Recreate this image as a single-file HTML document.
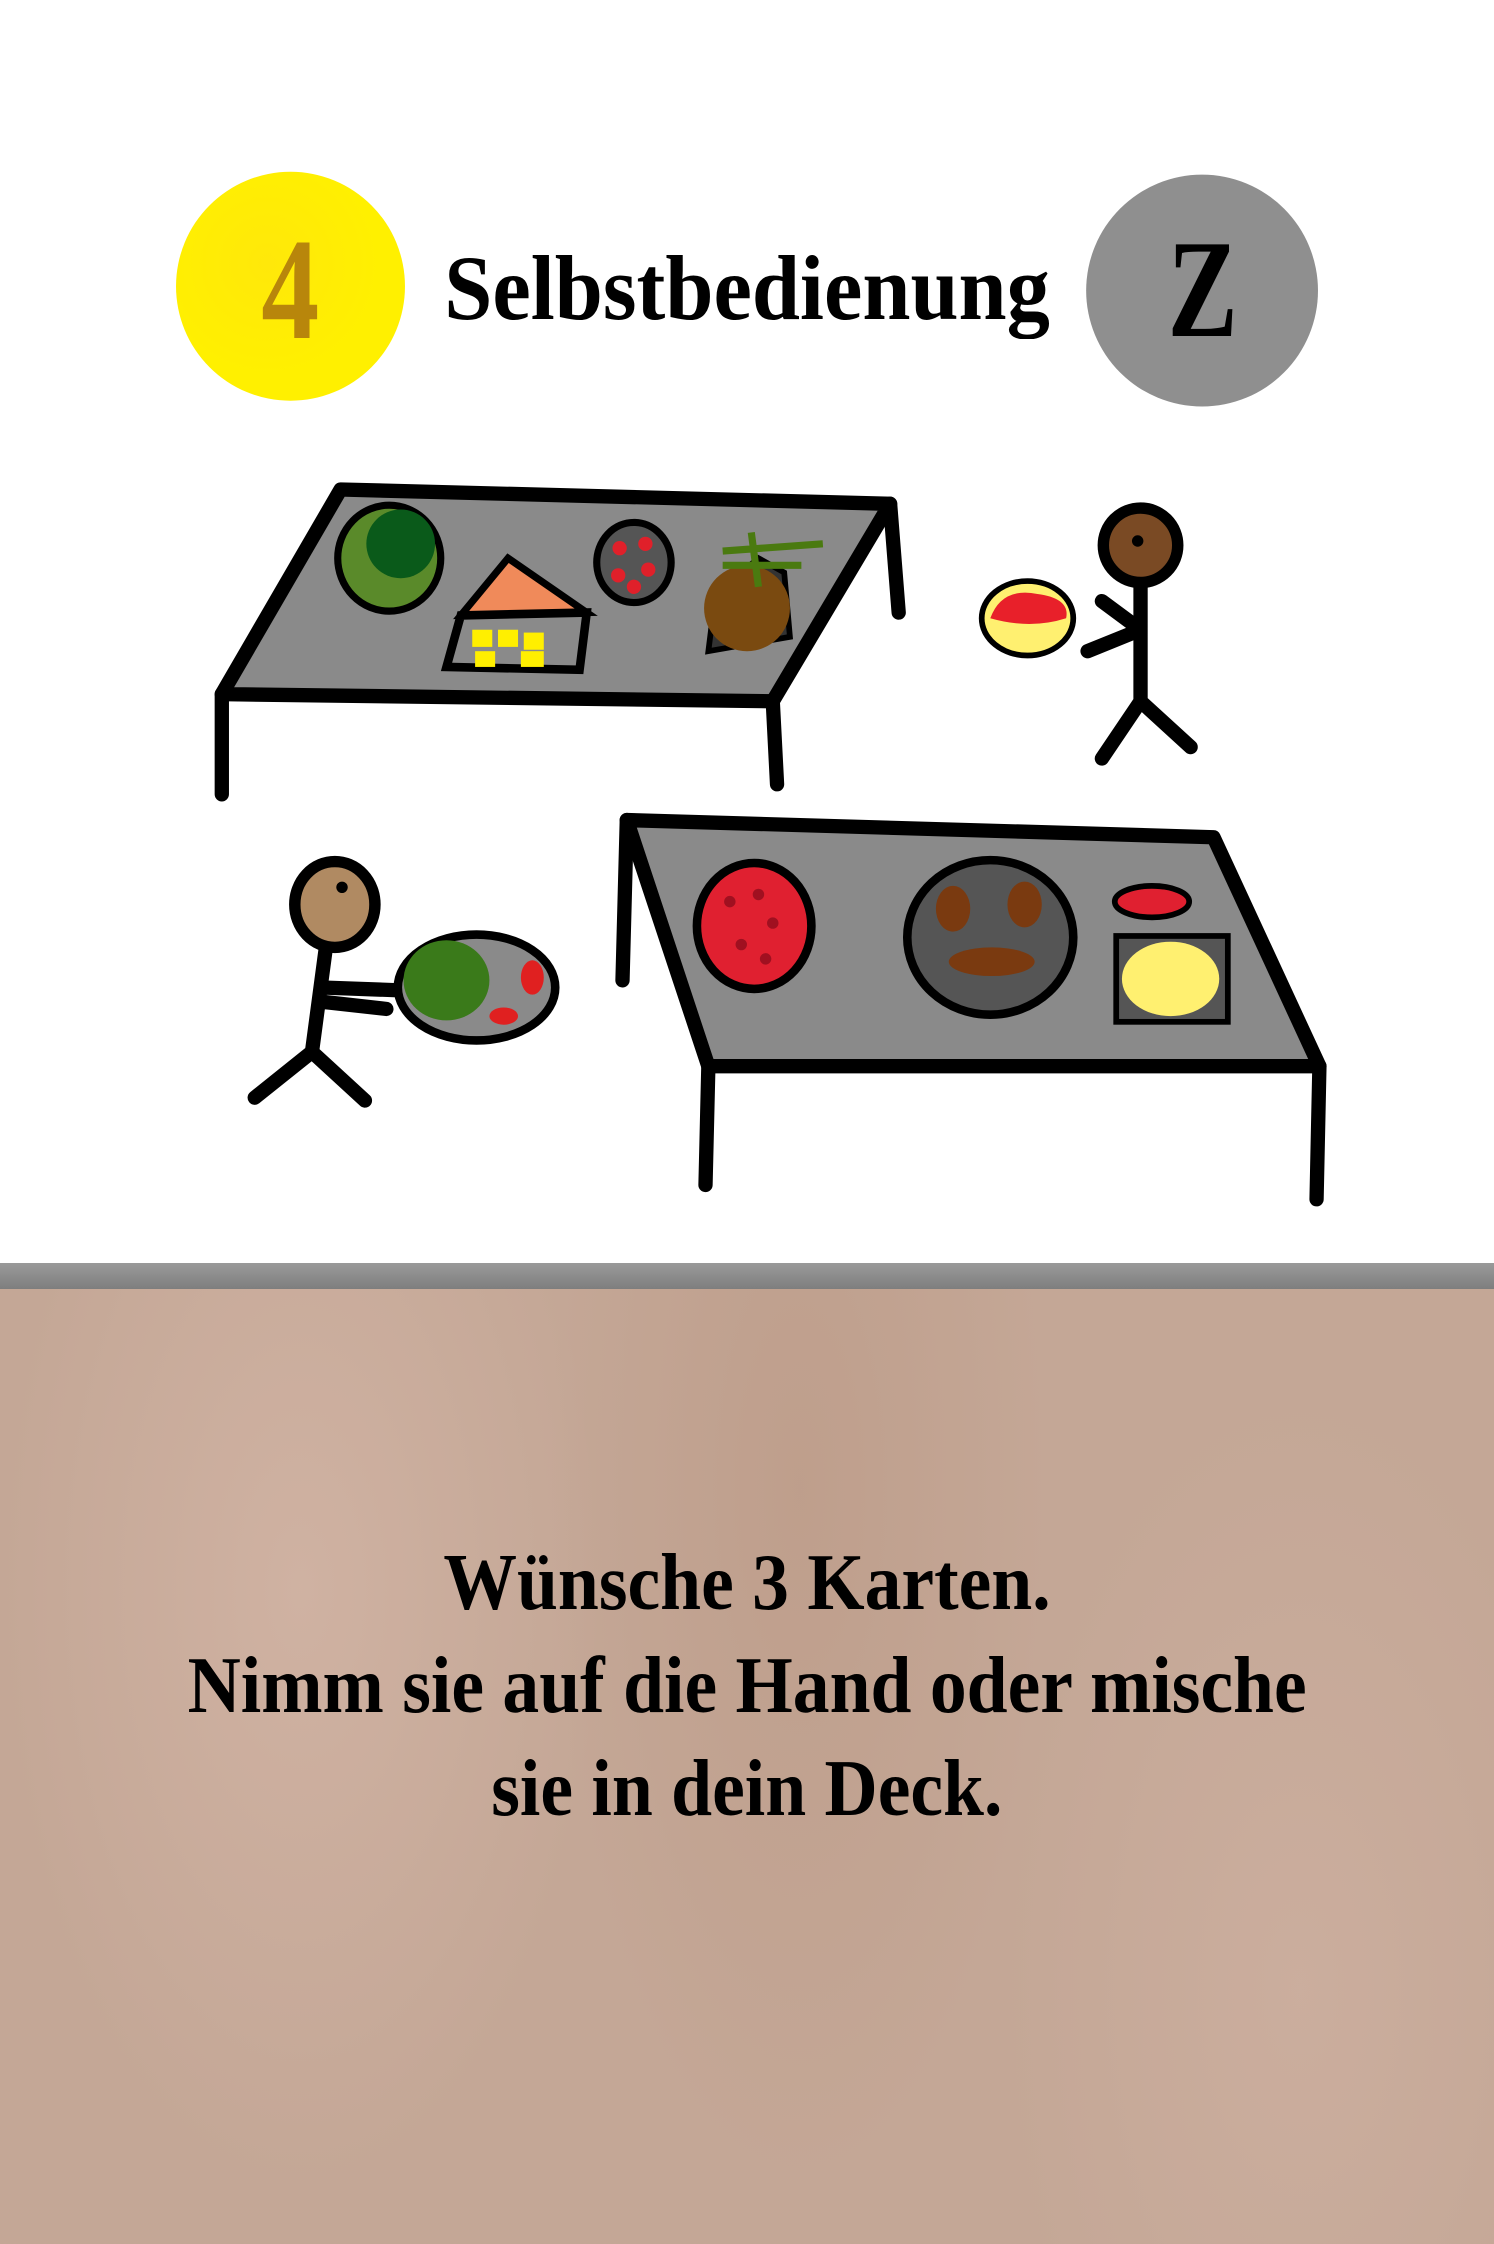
<!DOCTYPE html>
<html><head><meta charset="utf-8"><style>
html,body{margin:0;padding:0}
body{width:1494px;height:2244px;position:relative;overflow:hidden;background:#fff;font-family:"Liberation Serif",serif}
.band{position:absolute;left:0;top:1263px;width:1494px;height:26px;background:linear-gradient(#9a9a9a,#7e7e7e)}
.brown{position:absolute;left:0;top:1289px;width:1494px;height:955px;background:
radial-gradient(ellipse 300px 600px at 300px 300px,rgba(215,185,170,.6),transparent),
radial-gradient(ellipse 250px 700px at 800px 200px,rgba(185,150,130,.5),transparent),
radial-gradient(ellipse 300px 600px at 1300px 700px,rgba(210,180,165,.5),transparent),
#c4a796}
.t{position:absolute;left:0;width:1494px;text-align:center;font-weight:bold;color:#000;white-space:nowrap}
.t span{display:inline-block;transform:scaleX(.92)}
</style></head><body>
<div class="band"></div>
<div class="brown"></div>
<svg style="position:absolute;left:0;top:0" width="1494" height="2244" viewBox="0 0 1044 1568">
<defs><radialGradient id="y" cx=".4" cy=".4"><stop offset="0" stop-color="#ffe80a"/><stop offset="1" stop-color="#fff000"/></radialGradient></defs>
<ellipse cx="203" cy="200" rx="80" ry="80" fill="url(#y)"/>
<ellipse cx="840" cy="203" rx="81" ry="81" fill="#8f8f8f"/>
<g stroke="#000" stroke-width="10" stroke-linecap="round" stroke-linejoin="round" fill="none">
<polygon points="238,342 622,352 540,490 155,485" fill="#8a8a8a"/>
<path d="M155,485 L155,555 M540,490 L543,548 M622,352 L628,428"/>
<polygon points="438,573 848,585 922,745 495,745" fill="#8a8a8a"/>
<path d="M438,573 L435,685 M495,745 L493,828 M922,745 L920,838"/>
<path d="M797,405 L797,490 L770,530 M797,490 L832,522 M797,440 L760,455 M797,440 L770,420"/>
<path d="M228,660 L218,735 L178,767 M218,735 L255,769 M225,690 L280,692 M225,700 L270,705"/>
</g>
<ellipse cx="797" cy="381" rx="26" ry="26" fill="#7a4a24" stroke="#000" stroke-width="8"/>
<circle cx="795" cy="378" r="4" fill="#000"/>
<ellipse cx="234" cy="632" rx="28" ry="30" fill="#b08a62" stroke="#000" stroke-width="8"/>
<circle cx="239" cy="620" r="4" fill="#000"/>
<ellipse cx="272" cy="390" rx="36" ry="37" fill="#5a8a2a" stroke="#000" stroke-width="5"/>
<ellipse cx="280" cy="380" rx="24" ry="24" fill="#0a5a1a"/>
<path d="M322,430 L355,390 L410,428 Z" fill="#f08a5a" stroke="#000" stroke-width="5"/>
<path d="M322,430 L410,428 L405,468 L312,466 Z" fill="#8a8a8a" stroke="#000" stroke-width="6"/>
<g fill="#ffef00"><rect x="330" y="440" width="14" height="12"/><rect x="348" y="440" width="14" height="12"/><rect x="366" y="442" width="14" height="12"/><rect x="332" y="455" width="14" height="11"/><rect x="364" y="455" width="16" height="11"/></g>
<ellipse cx="443" cy="393" rx="26" ry="28" fill="#555" stroke="#000" stroke-width="5"/>
<g fill="#e0202a"><circle cx="433" cy="383" r="5"/><circle cx="451" cy="380" r="5"/><circle cx="432" cy="402" r="5"/><circle cx="453" cy="398" r="5"/><circle cx="443" cy="410" r="5"/></g>
<path d="M495,455 L500,415 L530,390 L548,400 L552,445 Z" fill="#333" stroke="#000" stroke-width="4"/>
<ellipse cx="522" cy="425" rx="30" ry="30" fill="#7a4a10"/>
<path d="M505,385 L575,380 M525,372 L530,410 M505,395 L560,395" stroke="#4a7a10" stroke-width="5"/>
<ellipse cx="718" cy="432" rx="32" ry="26" fill="#fff070" stroke="#000" stroke-width="4"/>
<path d="M692,432 Q700,410 725,415 Q748,418 745,432 Q720,440 692,432Z" fill="#e8202a"/>
<ellipse cx="333" cy="690" rx="55" ry="37" fill="#8a8a8a" stroke="#000" stroke-width="6"/>
<ellipse cx="312" cy="685" rx="30" ry="28" fill="#3a7a1a"/>
<ellipse cx="372" cy="683" rx="8" ry="12" fill="#e02020"/>
<ellipse cx="352" cy="710" rx="10" ry="6" fill="#e02020"/>
<ellipse cx="527" cy="647" rx="40" ry="44" fill="#e02030" stroke="#000" stroke-width="6"/>
<g fill="#a01020"><circle cx="510" cy="630" r="4"/><circle cx="530" cy="625" r="4"/><circle cx="540" cy="645" r="4"/><circle cx="518" cy="660" r="4"/><circle cx="535" cy="670" r="4"/></g>
<ellipse cx="692" cy="655" rx="58" ry="54" fill="#555" stroke="#000" stroke-width="6"/>
<g fill="#7a3a10"><ellipse cx="666" cy="635" rx="12" ry="16"/><ellipse cx="716" cy="632" rx="12" ry="16"/><ellipse cx="693" cy="672" rx="30" ry="10"/></g>
<ellipse cx="805" cy="630" rx="26" ry="11" fill="#e02030" stroke="#000" stroke-width="4"/>
<rect x="780" y="654" width="78" height="60" fill="#555" stroke="#000" stroke-width="4"/>
<ellipse cx="818" cy="684" rx="34" ry="26" fill="#fff070"/>
</svg>
<div class="t" style="top:238px;font-size:92px;line-height:100px"><span style="position:absolute;left:426px;width:610px;text-align:center;transform:scaleX(.94)">Selbstbedienung</span></div>
<div style="position:absolute;left:220px;top:220px;width:140px;text-align:center;font-size:145px;line-height:140px;font-weight:bold;color:#b8860b"><span style="display:inline-block;transform:scaleX(.8)">4</span></div>
<div style="position:absolute;left:1130px;top:220px;width:145px;text-align:center;font-size:140px;line-height:140px;font-weight:bold;color:#000"><span style="display:inline-block;transform:scaleX(.75)">Z</span></div>
<div class="t" style="top:1533px;font-size:80px;line-height:100px"><span>Wünsche 3 Karten.</span></div>
<div class="t" style="top:1636px;font-size:80px;line-height:100px"><span>Nimm sie auf die Hand oder mische</span></div>
<div class="t" style="top:1739px;font-size:80px;line-height:100px"><span>sie in dein Deck.</span></div>
</body></html>
